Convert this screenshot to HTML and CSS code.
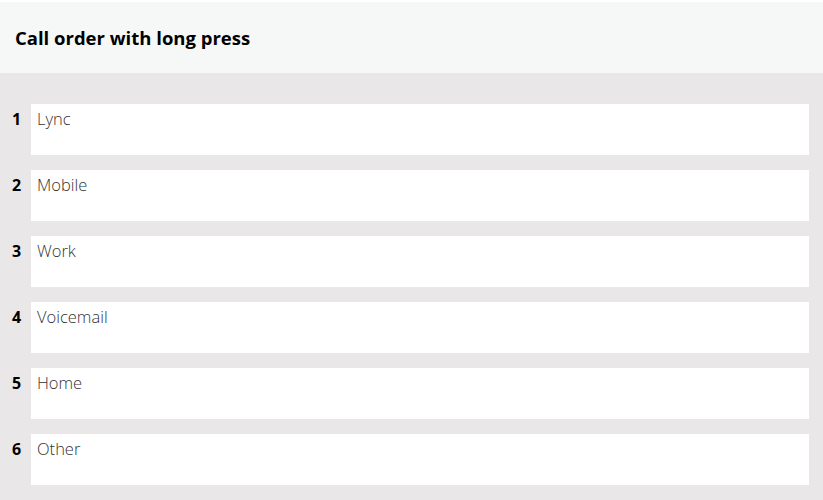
FILE: index.html
```html
<!DOCTYPE html>
<html>
<head>
<meta charset="utf-8">
<link rel="stylesheet" href="styles.css">
</head>
<body>
<div class="header"><h1 class="title">Call order with long press</h1></div>
<div class="list">
  <div class="row"><span class="num">1</span><div class="box">Lync</div></div>
  <div class="row"><span class="num">2</span><div class="box">Mobile</div></div>
  <div class="row"><span class="num">3</span><div class="box">Work</div></div>
  <div class="row"><span class="num">4</span><div class="box">Voicemail</div></div>
  <div class="row"><span class="num">5</span><div class="box">Home</div></div>
  <div class="row"><span class="num">6</span><div class="box">Other</div></div>
</div>
</body>
</html>
```
FILE: styles.css
```css
html, body {
  margin: 0;
  padding: 0;
  background: #e9e7e8;
  font-family: "Open Sans", "Noto Sans", sans-serif;
}
.header {
  background: #f6f8f8;
  border-top: 2px solid #ffffff;
  height: 71px;
  display: flex;
  align-items: center;
  padding-left: 15px;
}
.title {
  margin: 0;
  font-size: 18.5px;
  font-weight: 700;
  color: #000;
}
.list {
  display: flex;
  flex-direction: column;
  gap: 15px;
  padding: 31px 14px 0 0;
}
.row {
  display: flex;
  align-items: flex-start;
}
.num {
  width: 31px;
  padding-left: 2px;
  box-sizing: border-box;
  flex: none;
  text-align: center;
  font-weight: 700;
  font-size: 16px;
  line-height: 22px;
  padding-top: 4px;
  color: #000;
}
.box {
  flex: 1;
  background: #fff;
  height: 51px;
  box-sizing: border-box;
  padding: 4px 6px;
  font-size: 16.5px;
  line-height: 22px;
  font-weight: 300;
  color: #333;
}
```
